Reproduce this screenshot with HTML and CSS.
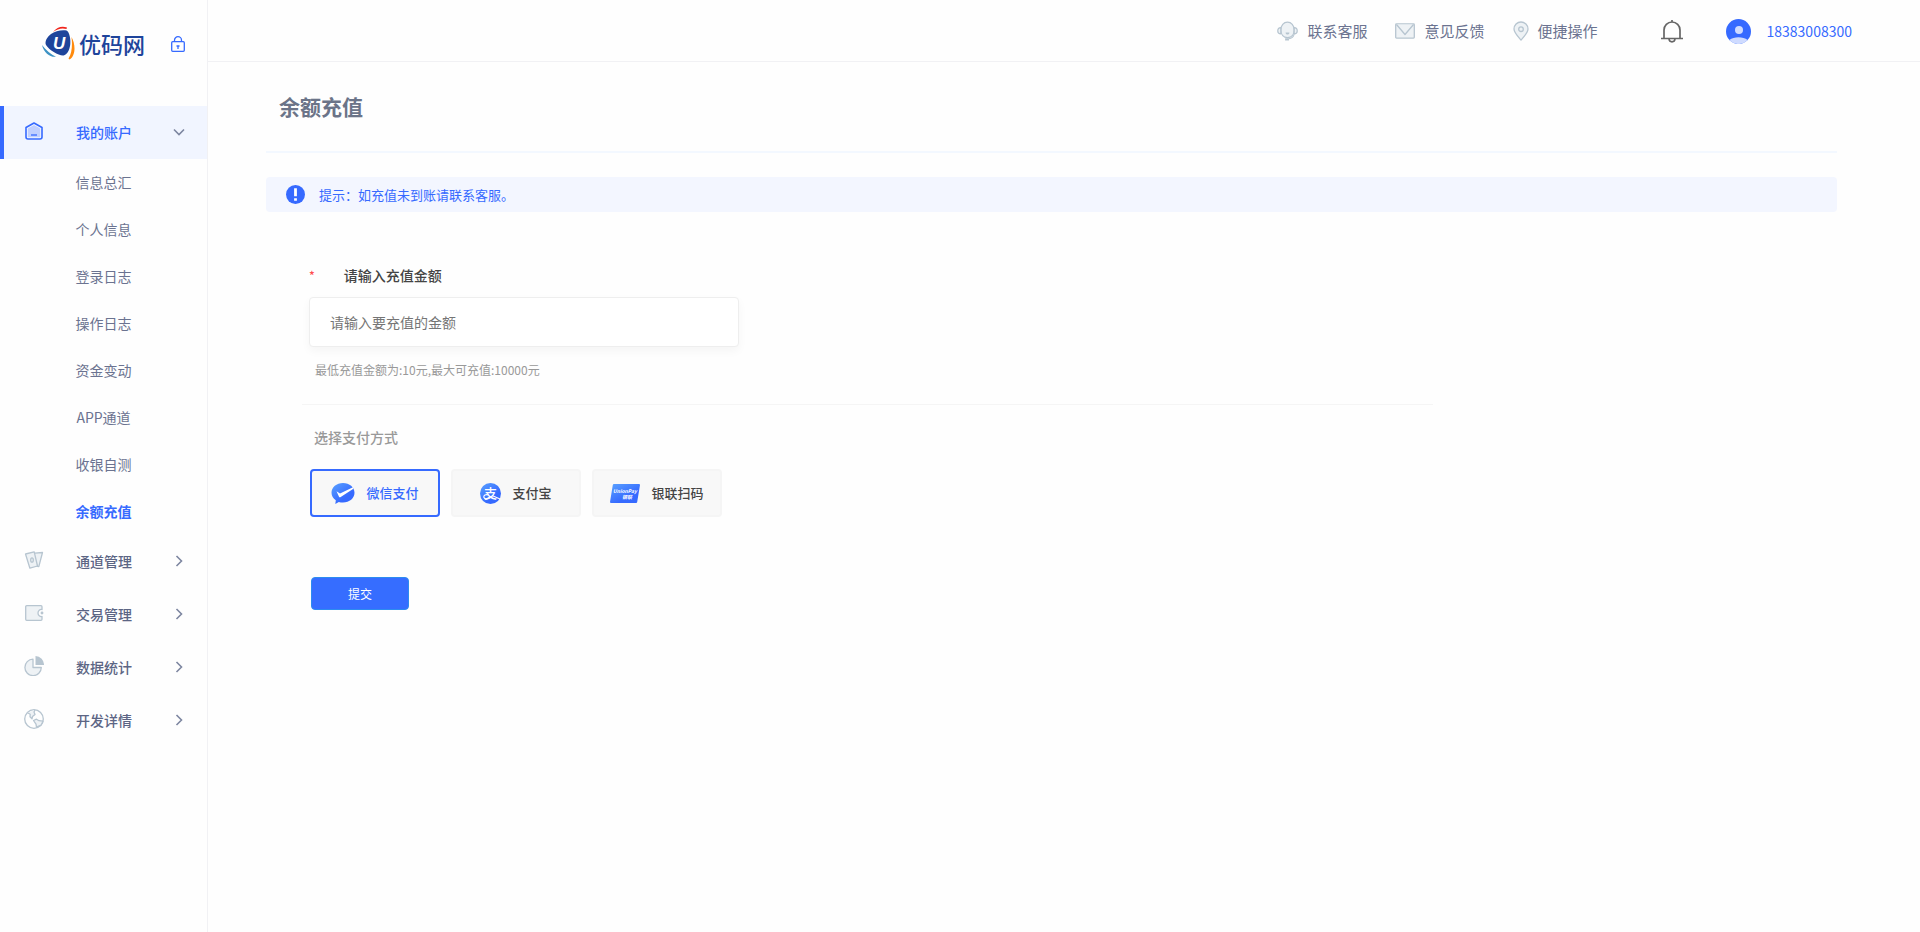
FILE: index.html
```html
<!DOCTYPE html>
<html lang="zh-CN">
<head>
    <meta charset="UTF-8">
    <meta name="viewport" content="width=device-width, initial-scale=1.0">
    <title>余额充值</title>
    <link rel="stylesheet" href="styles.css">
</head>
<body>
    <div class="layout">
        <aside class="sidebar">
            <div class="brand">
                <a class="logo" href="#">
                    <svg width="33" height="34" viewBox="0 0 33 34">
                        <path d="M9 8C13 5 20 3.500 24.500 4.500C27.500 5.500 29 14 28.200 19C27.500 24 25 29 21.500 29.500C17 30 7 24 4 19C2.500 15.500 5 11 9 8Z" fill="#1e449b"/>
                        <path d="M11 6C15 1 20-.5 25 1.500L24.500 3C20 1.700 15.500 2.700 11 6Z" fill="#f0251c"/>
                        <path d="M29.500 11C34 19 33.500 30 27.500 33.500L26.500 32.500C30 27 30.500 19 29.500 11Z" fill="#ff8a0c"/>
                        <path d="M0 19C2 27 8 31.500 14 30.800C9 28.500 4 24.500 0 19Z" fill="#3d93c4"/>
                        <text class="logo-u" x="11" y="23">U</text>
                    </svg>
                    <span class="logo-name">优码网</span>
                </a>
                <button class="lock" type="button" aria-label="锁定">
                    <svg width="14" height="16" viewBox="0 0 14 16" fill="none" stroke="#366aff" stroke-width="1.300">
                        <rect x=".7" y="5.700" width="12.600" height="9.600" rx="1"/>
                        <path d="M3.500 5.500V4.200a3.500 3.500 0 0 1 7 0v1.300M7 10v3M5.500 10h3"/>
                    </svg>
                </button>
            </div>
            <nav>
                <a class="menu-item active" href="#">
                    <svg class="menu-icon" width="20" height="20" viewBox="0 0 20 20">
                        <path d="M2 6.500L10 2l8 4.500V16a2 2 0 0 1-2 2H4a2 2 0 0 1-2-2z" fill="#f1f5ff" stroke="#366aff" stroke-width="1.600" stroke-linejoin="round"/>
                        <path d="M3.800 7.500L10 4l6.200 3.500V16.200H3.800z" fill="#c0cffe"/>
                        <path d="M7 14h6" stroke="#366aff" stroke-width="1.300"/>
                    </svg>
                    <span class="menu-text">我的账户</span>
                    <svg class="arrow" width="12" height="12" viewBox="0 0 12 12"><path d="M1 3.500l5 5 5-5"/></svg>
                </a>
                <ul class="submenu">
                    <li><a href="#">信息总汇</a></li>
                    <li><a href="#">个人信息</a></li>
                    <li><a href="#">登录日志</a></li>
                    <li><a href="#">操作日志</a></li>
                    <li><a href="#">资金变动</a></li>
                    <li><a href="#">APP通道</a></li>
                    <li><a href="#">收银自测</a></li>
                    <li><a class="current" href="#">余额充值</a></li>
                </ul>
                <a class="menu-item" href="#">
                    <svg class="menu-icon line-icon" width="20" height="20" viewBox="0 0 20 20">
                        <path d="M11 3.200l7.500-.7-3.700 14.200-3-.5"/>
                        <path d="M1.500 4l8.700-2.200L13.500 16l-7.600 2.200z"/>
                        <ellipse cx="8" cy="10" rx="1.300" ry="2.200"/>
                    </svg>
                    <span class="menu-text">通道管理</span>
                    <svg class="arrow" width="12" height="12" viewBox="0 0 12 12"><path d="M3.500 1l5 5-5 5"/></svg>
                </a>
                <a class="menu-item" href="#">
                    <svg class="menu-icon line-icon" width="20" height="20" viewBox="0 0 20 20">
                        <path d="M18 6.500V3.700a1 1 0 0 0-1-1H2.700a1 1 0 0 0-1 1v12.600a1 1 0 0 0 1 1H17a1 1 0 0 0 1-1v-2.800c-2 .4-4-1-4-3.500s2-3.900 4-3.500z"/>
                        <circle cx="18" cy="10" r=".8"/>
                    </svg>
                    <span class="menu-text">交易管理</span>
                    <svg class="arrow" width="12" height="12" viewBox="0 0 12 12"><path d="M3.500 1l5 5-5 5"/></svg>
                </a>
                <a class="menu-item" href="#">
                    <svg class="menu-icon line-icon" width="20" height="20" viewBox="0 0 20 20">
                        <path d="M9 3.200a8.200 8.200 0 1 0 8.300 8.300H9z"/>
                        <path class="solid" d="M11.500 0v9H20a8.700 8.700 0 0 0-8.500-9z"/>
                    </svg>
                    <span class="menu-text">数据统计</span>
                    <svg class="arrow" width="12" height="12" viewBox="0 0 12 12"><path d="M3.500 1l5 5-5 5"/></svg>
                </a>
                <a class="menu-item" href="#">
                    <svg class="menu-icon line-icon" width="20" height="20" viewBox="0 0 20 20">
                        <circle class="hollow" cx="10" cy="10" r="9.300"/>
                        <path d="M3.500 3.800l2.700 1.500-.2 2.500 2 2 .5-2.300 2.500-2L10 3l1-2M9.500 11.500l3-1.300 2.500 1.500 4 .5-2 4-4.500 2-.5-3z"/>
                    </svg>
                    <span class="menu-text">开发详情</span>
                    <svg class="arrow" width="12" height="12" viewBox="0 0 12 12"><path d="M3.500 1l5 5-5 5"/></svg>
                </a>
            </nav>
        </aside>

        <div class="page">
            <header class="topbar">
                <a class="top-link" href="#">
                    <svg class="line-icon" width="21" height="20" viewBox="0 0 22 20">
                        <path d="M4 9C4 4 7 .8 11 .8S18 4 18 9s-3 8-7 8-7-3-7-8z"/>
                        <path d="M4 6.500C2 6.500.8 8 .8 10S2 13 4 13zM18 6.500c2 0 3.200 1.500 3.200 3.500S20 13 18 13z"/>
                        <path class="solid" d="M9 11.500h4c0 3-4 3-4 0zM18.500 13c-.5 4-3 5.300-6 5.700v-1c3-.5 4.500-2 5-4.700zM8.500 17.700h4V20h-4z"/>
                    </svg>
                    <span>联系客服</span>
                </a>
                <a class="top-link" href="#">
                    <svg class="line-icon" width="20" height="16" viewBox="0 0 20 16">
                        <rect x=".7" y=".9" width="18.600" height="14.200" rx=".8"/>
                        <path d="M1.500 1.500L10 11.500l8.500-10"/>
                    </svg>
                    <span>意见反馈</span>
                </a>
                <a class="top-link" href="#">
                    <svg class="line-icon" width="16" height="20" viewBox="0 0 16 20">
                        <path d="M8 19C4 14.500 1 11.500 1 8a7 7 0 0 1 14 0c0 3.500-3 6.500-7 11z"/>
                        <circle cx="8" cy="8.200" r="2.300"/>
                    </svg>
                    <span>便捷操作</span>
                </a>
                <button class="bell" type="button" aria-label="消息">
                    <svg width="22" height="23" viewBox="0 0 22 23" fill="none" stroke="#666" stroke-width="1.700">
                        <path d="M3 18.500V10a8 8 0 0 1 16 0v8.500M0 18.500h22M8 19c.4 3.700 5.600 3.700 6 0M11 0v2"/>
                    </svg>
                </button>
                <a class="user" href="#">
                    <svg width="25" height="25" viewBox="0 0 25 25">
                        <circle cx="12.500" cy="12.500" r="12.500" fill="#366aff"/>
                        <circle cx="13" cy="11" r="4" fill="#cfdbff"/>
                        <path d="M3.300 21C8 17.300 17 17.300 21.700 21A12.500 12.500 0 0 1 3.300 21z" fill="#cfdbff"/>
                    </svg>
                    <span>18383008300</span>
                </a>
            </header>

            <main class="content">
                <h1>余额充值</h1>
                <div class="tip">
                    <svg width="19" height="19" viewBox="0 0 19 19">
                        <circle cx="9.500" cy="9.500" r="9.500" fill="#366aff"/>
                        <path d="M9.500 3.300v8M9.500 13.300v2.400" stroke="#fff" stroke-width="2.800"/>
                    </svg>
                    <span>提示：如充值未到账请联系客服。</span>
                </div>
                <form class="recharge">
                    <div class="amount">
                        <div class="amount-label">
                            <span class="required">*</span>
                            <label for="money">请输入充值金额</label>
                        </div>
                        <input id="money" type="text" placeholder="请输入要充值的金额">
                        <p class="hint">最低充值金额为:10元,最大可充值:10000元</p>
                    </div>
                    <fieldset class="pay">
                        <legend>选择支付方式</legend>
                        <div class="pay-list">
                            <label class="pay-item">
                                <input type="radio" name="pay" value="wechat" checked>
                                <svg width="24" height="21" viewBox="0 0 24 21">
                                    <defs>
                                        <linearGradient id="blue" x1="0" y1="0" x2=".6" y2=".7">
                                            <stop offset="0" stop-color="#5aa2ff"/>
                                            <stop offset="1" stop-color="#366aff"/>
                                        </linearGradient>
                                    </defs>
                                    <path d="M12 0c6.500 0 11.500 4.300 11.500 9.800S18.500 19.500 12 19.500c-1.500 0-3-.2-4.200-.6L4.300 21l.5-3.700C2.200 15.500.5 12.800.5 9.800.5 4.300 5.500 0 12 0z" fill="url(#blue)"/>
                                    <path d="M5.500 8.200L9 10.500 22 4.300v1.600L9.300 14.200c-.6.3-1 .2-1.300-.4z" fill="#fff"/>
                                </svg>
                                <span>微信支付</span>
                            </label>
                            <label class="pay-item">
                                <input type="radio" name="pay" value="alipay">
                                <svg width="21" height="21" viewBox="0 0 21 21">
                                    <circle cx="10.500" cy="10.500" r="10.500" fill="url(#blue)"/>
                                    <text class="zhi" x="10.500" y="15" text-anchor="middle">支</text>
                                    <path d="M8.500 11.800C5.500 11 3.500 12.300 3.800 14.200C4.200 16.500 8 16.500 10.500 13.500M12 12.500L20 16" fill="none" stroke="#fff" stroke-width="1.200"/>
                                </svg>
                                <span>支付宝</span>
                            </label>
                            <label class="pay-item">
                                <input type="radio" name="pay" value="unionpay">
                                <svg width="30" height="19" viewBox="0 0 30 19">
                                    <path d="M4 0h25a1 1 0 0 1 1 1l-2.800 17a1.200 1.200 0 0 1-1.200 1H1a1 1 0 0 1-1-1L2.800 1A1.200 1.200 0 0 1 4 0z" fill="url(#blue)"/>
                                    <text class="union" x="3" y="9">UnionPay</text>
                                    <text class="union" x="12" y="15">银联</text>
                                </svg>
                                <span>银联扫码</span>
                            </label>
                        </div>
                    </fieldset>
                    <button class="submit" type="button">提交</button>
                </form>
            </main>
        </div>
    </div>
</body>
</html>
```
FILE: styles.css
```css
* {
    box-sizing: border-box;
}
body {
    margin: 0;
    font-family: "Noto Sans CJK SC", "Noto Sans", sans-serif;
    font-size: 14px;
    line-height: 20px;
    color: #6b7390;
    background-color: #fefefe;
}
a {
    color: inherit;
    text-decoration: none;
}
button {
    padding: 0;
    border: none;
    background: none;
    font-family: inherit;
    cursor: pointer;
}
svg {
    display: block;
    flex-shrink: 0;
}
.layout {
    display: flex;
    min-height: 100vh;
}

/* 左侧菜单 */
.sidebar {
    width: 208px;
    flex-shrink: 0;
    border-right: 1px solid #f1f1f4;
}
.brand {
    height: 106px;
    padding: 26px 22px 0 42px;
    display: flex;
    align-items: flex-start;
    justify-content: space-between;
}
.logo {
    display: flex;
    align-items: center;
    gap: 4px;
}
.logo-name {
    font-size: 22px;
    font-weight: 500;
    line-height: 34px;
    color: #1e449b;
}
.logo-u {
    font-family: "Liberation Sans", sans-serif;
    font-size: 17px;
    font-weight: bold;
    font-style: italic;
    fill: #fff;
}
.lock {
    margin-top: 10px;
}
.menu-item {
    display: flex;
    align-items: center;
    height: 53px;
    padding: 0 22px 2px 24px;
    font-weight: 500;
    color: #5c6584;
}
.menu-item.active {
    padding-left: 20px;
    border-left: 4px solid #366aff;
    background-color: #f1f5ff;
    color: #366aff;
}
.menu-icon {
    margin-bottom: 2px;
}
.menu-text {
    flex: 1;
    margin-left: 32px;
}
.arrow {
    fill: none;
    stroke: #7d86a0;
    stroke-width: 1.6;
}
.line-icon {
    fill: #eef2f5;
    stroke: #b7c5d0;
    stroke-width: 1.3;
    stroke-linejoin: round;
}
.line-icon .solid {
    fill: #b7c5d0;
    stroke: none;
}
.line-icon .hollow {
    fill: none;
}
.submenu {
    margin: 0;
    padding: 0;
    list-style: none;
}
.submenu a {
    display: block;
    line-height: 47px;
    text-align: center;
}
.submenu .current {
    font-weight: bold;
    color: #366aff;
}

/* 顶部 */
.page {
    flex: 1;
    min-width: 0;
}
.topbar {
    display: flex;
    align-items: center;
    justify-content: flex-end;
    height: 62px;
    padding: 1px 68px 0 0;
    border-bottom: 1px solid #f1f1f4;
}
.top-link {
    display: flex;
    align-items: center;
    gap: 9px;
    margin-right: 28px;
    font-size: 15px;
}
.bell {
    margin: 0 43px 0 35px;
}
.user {
    display: flex;
    align-items: center;
    gap: 16px;
    color: #366aff;
}

/* 内容 */
.content {
    padding: 0 83px 40px 58px;
}
h1 {
    margin: 0;
    padding: 30px 13px 31px;
    border-bottom: 2px solid #f3f8ff;
    font-size: 21px;
    line-height: 28px;
    color: #6b7488;
}
.tip {
    display: flex;
    align-items: center;
    gap: 14px;
    height: 35px;
    margin-top: 24px;
    padding-left: 20px;
    border-radius: 4px;
    background-color: #f3f6ff;
    font-size: 13px;
    color: #366aff;
}
.recharge {
    width: 72%;
    margin: 53px 0 0 36px;
}
.amount {
    padding: 0 7px 24px;
    border-bottom: 1px solid #f5f5f5;
}
.amount-label {
    display: flex;
    align-items: center;
    gap: 29px;
    font-weight: 500;
    color: #444;
}
.required {
    font-size: 12px;
    color: #ff4d4f;
}
#money {
    display: block;
    width: 430px;
    max-width: 100%;
    height: 50px;
    margin-top: 12px;
    padding: 0 20px;
    border: 1px solid #eee;
    border-radius: 4px;
    box-shadow: 0 4px 10px rgba(0, 0, 0, 0.04);
    font-family: inherit;
    font-size: 14px;
}
#money::placeholder {
    color: #757575;
}
.hint {
    margin: 13px 0 0 6px;
    font-size: 12px;
    color: #999;
}
.pay {
    margin: 0;
    padding: 22px 8px 0;
    border: none;
}
.pay legend {
    float: left;
    width: 100%;
    padding: 0 4px;
    font-weight: 500;
    color: #999;
}
.pay-list {
    clear: both;
    display: flex;
    flex-wrap: wrap;
    gap: 11px;
    padding-top: 22px;
}
.pay-item {
    display: flex;
    align-items: center;
    justify-content: center;
    gap: 11px;
    width: 130px;
    height: 48px;
    border: 2px solid #f5f5f5;
    border-radius: 4px;
    background-color: #f8f8f8;
    font-size: 13px;
    font-weight: 500;
    color: #444;
    cursor: pointer;
}
.pay-item input {
    position: absolute;
    opacity: 0;
    pointer-events: none;
}
.pay-item:has(input:checked) {
    border-color: #366aff;
    color: #366aff;
}
.zhi {
    font-size: 13px;
    font-weight: 500;
    fill: #fff;
}
.union {
    font-size: 5px;
    font-weight: bold;
    font-style: italic;
    fill: #fff;
}
.submit {
    width: 98px;
    height: 33px;
    margin: 60px 0 0 9px;
    border: 1px solid #2d8cf0;
    border-radius: 4px;
    background-color: #366dff;
    font-size: 12px;
    color: #fff;
}
```
